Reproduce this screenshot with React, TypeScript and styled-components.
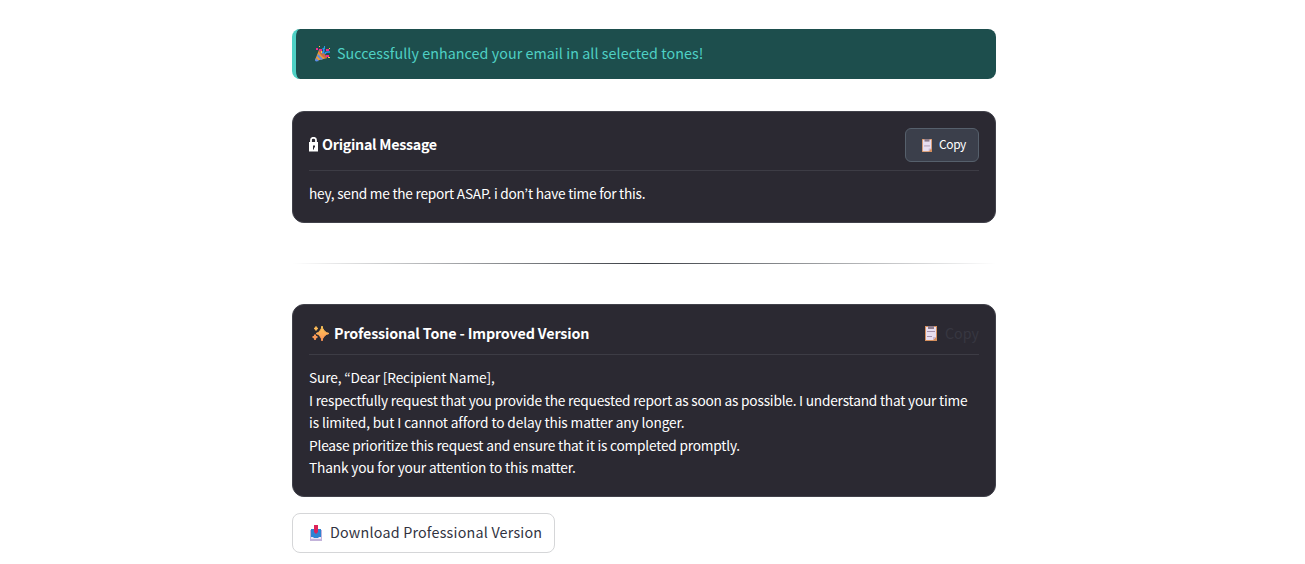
import React from 'react';
import styled, { createGlobalStyle } from 'styled-components';

const GlobalStyle = createGlobalStyle`
  * { box-sizing: border-box; }
  body { margin: 0; background: #fff; font-family: "Noto Sans CJK KR", "Noto Sans", sans-serif; }
`;

const Page = styled.main`
  width: 704px;
  height: 564px;
  margin-left: 292px;
  padding-top: 29px;
  overflow: hidden;
`;

const Text = styled.span<{ $size?: number; $track?: number; $weight?: number; $lift?: number }>`
  padding-bottom: ${p => p.$lift ?? 0}px;
  font-size: ${p => p.$size ?? 14.3}px;
  font-weight: ${p => p.$weight ?? 400};
  letter-spacing: ${p => p.$track ?? 0}px;
  white-space: nowrap;
`;

const Alert = styled.div`
  display: flex;
  align-items: center;
  height: 50px;
  padding-left: 19px;
  border-left: 4px solid #4fd1c5;
  border-radius: 8px;
  background: #1d4e4d;
  color: #4fd1c5;
  svg { margin-right: 6px; }
`;

const Card = styled.section<{ $top: number; $height: number }>`
  height: ${p => p.$height}px;
  margin-top: ${p => p.$top}px;
  padding: 16px;
  border: 1px solid #41414a;
  border-radius: 12px;
  background: #2b2932;
  color: #fff;
`;

const CardHeader = styled.header<{ $height: number }>`
  display: flex;
  align-items: flex-start;
  justify-content: space-between;
  height: ${p => p.$height}px;
  border-bottom: 1px solid #3d3c45;
`;

const Title = styled.h2<{ $height: number; $gap: number; $inset?: number }>`
  display: flex;
  align-items: center;
  gap: ${p => p.$gap}px;
  height: ${p => p.$height}px;
  margin: 0;
  padding-left: ${p => p.$inset ?? 0}px;
`;

const CopyButton = styled.button`
  display: flex;
  align-items: center;
  gap: 7px;
  width: 74px;
  height: 34px;
  padding: 0 0 0 16px;
  border: 1px solid #56606c;
  border-radius: 6px;
  background: #3b3f4b;
  color: #fff;
  font-family: inherit;
`;

const GhostCopy = styled.div`
  display: flex;
  align-items: center;
  gap: 8px;
  height: 25px;
  color: #373741;
`;

const Body = styled.div`
  display: flex;
  flex-direction: column;
  padding-top: 11px;
`;

const Line = styled(Text)`
  height: 22.5px;
  font-size: 13.7px;
  line-height: 22.5px;
`;

const Divider = styled.hr`
  height: 1px;
  margin: 40px 0;
  border: 0;
  background: linear-gradient(90deg, transparent, #3b3f45, transparent);
`;

const Download = styled.button`
  display: flex;
  align-items: center;
  gap: 8px;
  width: 263px;
  height: 40px;
  margin-top: 16px;
  padding: 0 0 0 17px;
  border: 1px solid #d5d6d8;
  border-radius: 8px;
  background: #fff;
  color: #31333f;
  font-family: inherit;
`;

const Party = () => (
  <svg width="16" height="16" viewBox="0 0 16 16">
    <path d="M4 4 12 12 1 15 0 14Z" fill="#ed9a35" />
    <path d="m3 8 5 5-2 1-4-4ZM1 12l3 3-3 .5-1-1Z" fill="#588be9" />
    <path d="M4 4q2-1 5 3t3 5q-3 1-6-3T4 4Z" fill="#c66a4b" />
    <path d="M7 7q3-1 1-5M10 8q0-2 3-2h2" fill="none" stroke="#2992ef" strokeWidth="1.7" />
    <path d="M1 2h2v2H1ZM4 3h3v2H4ZM11 3h3v2h-3ZM11 9h3v2h-3Z" fill="#f22c91" />
    <path d="M4 0h1v1H4ZM14 2h1v1h-1ZM13 11h2v1h-2ZM6 5h1v2H6Z" fill="#ffc544" />
    <path d="M9 0h1v3H9Z" fill="#2c9cdc" />
  </svg>
);

const Lock = () => (
  <svg width="9" height="16" viewBox="0 0 9 16">
    <path d="M2 6V3Q2 .800 4.500 .800T7 3V6" fill="none" stroke="#fff" strokeWidth="1.8" />
    <path d="M0 5h9V14.500H0Z" fill="#fff" />
    <path d="M4 8.500h2v2H5v2H4Z" fill="#2b2932" />
  </svg>
);

const Sparkles = () => (
  <svg width="17" height="16" viewBox="0 0 17 16">
    <defs>
      <linearGradient id="spark" x1="0" y1="0" x2="0" y2="1">
        <stop stopColor="#ffca58" /><stop offset="1" stopColor="#ff9255" />
      </linearGradient>
    </defs>
    <path d="M10 0q1 6 7 7.5-6 1.5-7 7.500-1-6-6-7.500 5-1.500 6-7.500Z" fill="url(#spark)" stroke="url(#spark)" strokeWidth="1" />
    <path d="M4 .5q.4 1.600 2 2-1.600.4-2 2-.4-1.600-2-2 1.600-.4 2-2Z" fill="#ffbd58" stroke="#ffbd58" strokeWidth="1" />
    <path d="M3 8.500q.5 2 2.500 2.500-2 .5-2.500 3-.5-2.500-2.500-3 2-.5 2.500-2.500Z" fill="#ff9b58" stroke="#ff9b58" strokeWidth="1" />
  </svg>
);

const Clipboard = ({ small = false }: { small?: boolean }) => (
  <svg width={small ? 10 : 12} height={small ? 13 : 15} viewBox="0 0 12 15" preserveAspectRatio="none">
    <path d="M0 0h12v15H0Z" fill="#d6905e" />
    <path d="M1 1h10v10l-3 3H1Z" fill="#e8def0" />
    <path d="M3 0h6v3H3Z" fill="#8c7b8b" />
    <path d={small ? 'M2.500 8h7' : 'M2 5.500h8M2 10.500h5'} stroke="#a590ab" />
    <path d="M8 14v-3h3Z" fill="#cbb7d1" />
  </svg>
);

const Inbox = () => (
  <svg width="12" height="16" viewBox="0 0 12 16" preserveAspectRatio="none">
    <path d="M0 5h12v11H0Z" fill="#c3b3da" />
    <path d="M1 4h10v9H1Z" fill="#2f83d2" />
    <path d="M1 12h2l1 1h4l1-1h2v2H1Z" fill="#eee4f4" />
    <path d="M4 0h4v7L6 9 4 7Z" fill="#dc2359" />
  </svg>
);

const message = [
  { text: 'Sure, “Dear [Recipient Name],', track: -0.14 },
  { text: 'I respectfully request that you provide the requested report as soon as possible. I understand that your time', track: -0.215 },
  { text: 'is limited, but I cannot afford to delay this matter any longer.', track: -0.12 },
  { text: 'Please prioritize this request and ensure that it is completed promptly.', track: -0.21 },
  { text: 'Thank you for your attention to this matter.', track: -0.16 },
];

export default function App() {
  return (
    <>
      <GlobalStyle />
      <Page>
        <Alert><Party /><Text $track={0.055} $lift={3}>Successfully enhanced your email in all selected tones!</Text></Alert>
        <Card $top={32} $height={112}>
          <CardHeader $height={43}>
            <Title $height={34} $gap={4}><Lock /><Text $weight={700} $track={-0.29} $lift={4}>Original Message</Text></Title>
            <CopyButton><Clipboard small /><Text $size={12} $track={-0.4} $lift={4}>Copy</Text></CopyButton>
          </CardHeader>
          <Body><Line $track={-0.25}>hey, send me the report ASAP. i don’t have time for this.</Line></Body>
        </Card>
        <Divider />
        <Card $top={0} $height={193}>
          <CardHeader $height={34}>
            <Title $height={25} $gap={5} $inset={3}><Sparkles /><Text $weight={700} $track={-0.15} $lift={2}>Professional Tone - Improved Version</Text></Title>
            <GhostCopy><Clipboard /><Text $lift={2}>Copy</Text></GhostCopy>
          </CardHeader>
          <Body>{message.map(l => <Line key={l.text} $track={l.track}>{l.text}</Line>)}</Body>
        </Card>
        <Download><Inbox /><Text $track={0.21} $lift={3}>Download Professional Version</Text></Download>
      </Page>
    </>
  );
}
